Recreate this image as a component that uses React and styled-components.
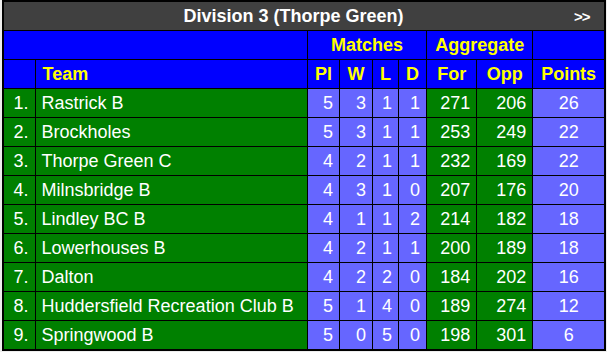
import React from 'react';
import styled, { createGlobalStyle } from 'styled-components';

const GlobalStyle = createGlobalStyle`
  body {
    margin: 0;
    background: #eeeeee;
    font-family: "Liberation Sans", Arial, sans-serif;
  }
`;

const Styled = {
  Wrapper: styled.div`
    padding-left: 2px;
  `,
  Table: styled.table`
    border-collapse: collapse;
    table-layout: fixed;
    width: 604px;
    border: 2px solid #000;
    font-size: 18px;
  `,
  TitleCell: styled.th`
    background: #404040;
    color: #fff;
    height: 28px;
    padding: 0;
    border: 1px solid #000;
  `,
  TitleBar: styled.div`
    display: flex;
    align-items: center;
  `,
  TitleText: styled.span`
    flex: 1;
    text-align: center;
    font-weight: bold;
    font-size: 18px;
  `,
  More: styled.span`
    flex: 0 0 30px;
    margin-left: -9px;
    text-align: left;
    font-size: 15px;
    font-weight: bold;
    letter-spacing: -1px;
  `,
  HeadCell: styled.th`
    background: #0000ff;
    color: #ffff00;
    font-weight: bold;
    height: 28px;
    padding: 0 4px;
    text-align: ${(p) => p.$align || 'center'};
    padding-left: ${(p) => (p.$align === 'left' ? '7px' : '4px')};
    border: 1px solid #000;
    white-space: nowrap;
  `,
  Cell: styled.td`
    background: ${(p) => (p.$light ? '#6666ff' : '#008000')};
    color: #fff;
    height: 28px;
    padding: 0 6px;
    text-align: ${(p) => p.$align || 'right'};
    border: 1px solid #000;
    white-space: nowrap;
    overflow: hidden;
  `,
};

const widths = [32, 272, 32, 33, 26, 28, 50, 56, 72];

const rows = [
  ['Rastrick B', 5, 3, 1, 1, 271, 206, 26],
  ['Brockholes', 5, 3, 1, 1, 253, 249, 22],
  ['Thorpe Green C', 4, 2, 1, 1, 232, 169, 22],
  ['Milnsbridge B', 4, 3, 1, 0, 207, 176, 20],
  ['Lindley BC B', 4, 1, 1, 2, 214, 182, 18],
  ['Lowerhouses B', 4, 2, 1, 1, 200, 189, 18],
  ['Dalton', 4, 2, 2, 0, 184, 202, 16],
  ['Huddersfield Recreation Club B', 5, 1, 4, 0, 189, 274, 12],
  ['Springwood B', 5, 0, 5, 0, 198, 301, 6],
];

const App = () => (
  <Styled.Wrapper>
    <GlobalStyle />
    <Styled.Table>
      <colgroup>
        {widths.map((w, i) => (
          <col key={`col-${i}`} style={{ width: w }} />
        ))}
      </colgroup>
      <thead>
        <tr>
          <Styled.TitleCell colSpan={9}>
            <Styled.TitleBar>
              <Styled.TitleText>Division 3 (Thorpe Green)</Styled.TitleText>
              <Styled.More>&gt;&gt;</Styled.More>
            </Styled.TitleBar>
          </Styled.TitleCell>
        </tr>
        <tr>
          <Styled.HeadCell colSpan={2} />
          <Styled.HeadCell colSpan={4}>Matches</Styled.HeadCell>
          <Styled.HeadCell colSpan={2}>Aggregate</Styled.HeadCell>
          <Styled.HeadCell />
        </tr>
        <tr>
          <Styled.HeadCell />
          <Styled.HeadCell $align="left">Team</Styled.HeadCell>
          <Styled.HeadCell>Pl</Styled.HeadCell>
          <Styled.HeadCell>W</Styled.HeadCell>
          <Styled.HeadCell>L</Styled.HeadCell>
          <Styled.HeadCell>D</Styled.HeadCell>
          <Styled.HeadCell>For</Styled.HeadCell>
          <Styled.HeadCell>Opp</Styled.HeadCell>
          <Styled.HeadCell>Points</Styled.HeadCell>
        </tr>
      </thead>
      <tbody>
        {rows.map(([team, pl, w, l, d, f, opp, pts], i) => (
          <tr key={team}>
            <Styled.Cell>{i + 1}.</Styled.Cell>
            <Styled.Cell $align="left">{team}</Styled.Cell>
            <Styled.Cell $light>{pl}</Styled.Cell>
            <Styled.Cell $light>{w}</Styled.Cell>
            <Styled.Cell $light>{l}</Styled.Cell>
            <Styled.Cell $light>{d}</Styled.Cell>
            <Styled.Cell>{f}</Styled.Cell>
            <Styled.Cell>{opp}</Styled.Cell>
            <Styled.Cell $light $align="center">
              {pts}
            </Styled.Cell>
          </tr>
        ))}
      </tbody>
    </Styled.Table>
  </Styled.Wrapper>
);

export default App;
